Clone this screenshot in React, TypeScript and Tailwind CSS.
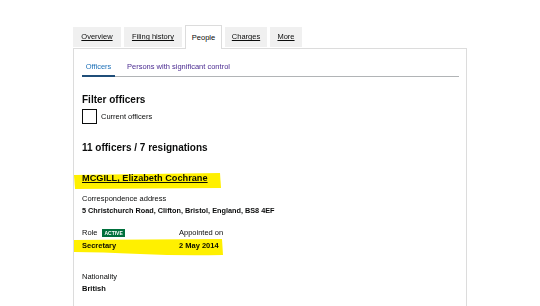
import React from "react";

const tabs = [
  { label: "Overview", w: "w-[48px]" },
  { label: "Filing history", w: "w-[58px]" },
  { label: "People", w: "w-[37px]", active: true },
  { label: "Charges", w: "w-[42px]" },
  { label: "More", w: "w-[32px]" },
];

export default function App() {
  return (
    <div
      className="relative w-[540px] h-[306px] overflow-hidden bg-white text-[#0b0c0c]"
      style={{ fontFamily: "'Liberation Sans', Arial, sans-serif" }}
    >
      <div className="pl-[73px] pt-[25px]">
        {/* Tabs */}
        <div className="flex items-start gap-[3px] h-[24px]">
          {tabs.map((t) =>
            t.active ? (
              <div
                key={t.label}
                className={`${t.w} relative z-10 h-[24px] flex items-center justify-center border border-b-0 border-[#dcdcdc] bg-white text-[7.5px]`}
              >
                {t.label}
              </div>
            ) : (
              <div
                key={t.label}
                className={`${t.w} mt-[2px] h-[20px] flex items-center justify-center bg-[#f0f0f0] text-[7.5px] underline`}
              >
                {t.label}
              </div>
            )
          )}
        </div>

        {/* Panel */}
        <div className="-mt-px w-[394px] h-[300px] border border-[#dcdcdc] pl-[8px] pr-[7px] pt-[9px]">
          <div className="flex items-end border-b border-[#b1b4b6] h-[19px] text-[7.5px]">
            <div className="w-[33px] h-full flex items-center justify-center text-[#1d70b8] border-b-2 border-[#1f4e79] -mb-px">
              Officers
            </div>
            <div className="ml-[12px] h-full flex items-center text-[#4c2c92]">
              Persons with significant control
            </div>
          </div>

          <div className="mt-[16px] text-[10px] font-bold leading-[14px]">Filter officers</div>
          <div className="mt-[2px] flex items-center">
            <div className="w-[15px] h-[15px] border border-[#0b0c0c]" />
            <span className="ml-[4px] text-[7.5px]">Current officers</span>
          </div>

          <div className="mt-[17px] text-[10px] font-bold leading-[14px]">11 officers / 7 resignations</div>

          <div className="mt-[17px] text-[9.2px] font-bold underline leading-[12px]">MCGILL, Elizabeth Cochrane</div>

          <div className="mt-[10px] text-[7.5px] leading-[10px]">Correspondence address</div>
          <div className="mt-[2px] text-[7.3px] font-bold leading-[10px]">
            5 Christchurch Road, Clifton, Bristol, England, BS8 4EF
          </div>

          <div className="mt-[12px] flex text-[7.5px] leading-[10px]">
            <div className="w-[97px]">
              <div className="flex items-center">
                <span>Role</span>
                <span className="ml-[5px] bg-[#00703c] text-white font-bold text-[5px] leading-[8px] px-[2px]">ACTIVE</span>
              </div>
              <div className="mt-[3px] font-bold">Secretary</div>
            </div>
            <div>
              <div>Appointed on</div>
              <div className="mt-[3px] font-bold">2 May 2014</div>
            </div>
          </div>

          <div className="mt-[21px] text-[7.5px] leading-[10px]">Nationality</div>
          <div className="mt-[2px] text-[7.5px] font-bold leading-[10px]">British</div>
        </div>
      </div>

      {/* Marker highlights */}
      <svg
        className="absolute left-0 top-0 pointer-events-none mix-blend-multiply"
        width="540"
        height="306"
      >
        <path d="M74 175 L220 173 L221 188 L75 189 Z" fill="#fff000" />
        <path d="M74 240 L222 239 L223 255 Q180 256 140 254 Q100 252 74 252 Z" fill="#fff000" />
      </svg>
    </div>
  );
}
